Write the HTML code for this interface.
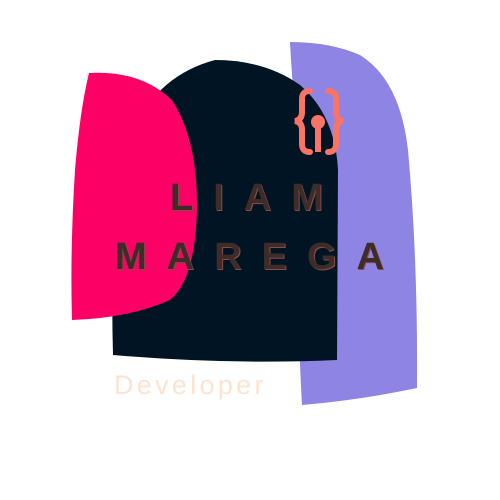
<!DOCTYPE html>
<html><head><style>
body{margin:0;width:500px;height:500px;background:#fff;position:relative;overflow:hidden;font-family:"Liberation Sans",sans-serif}
svg{position:absolute;left:0;top:0}
.t{position:absolute;color:#3d2c28;font-size:38px;font-weight:bold;letter-spacing:20px;text-shadow:1px 1px 0 #8a4a48;white-space:nowrap}
</style></head><body>
<svg width="500" height="500" viewBox="0 0 500 500">
<path d="M290 42 Q330 42 360 55 Q400 80 408 150 Q418 260 417 388 Q360 400 302 405 Q296 300 298 150 Q292 80 290 42Z" fill="#8e84e3"/>
<path d="M215 60 Q265 60 300 85 Q335 115 338 170 L337 360 Q230 365 113 355 Q110 250 120 170 Q140 80 215 60Z" fill="#001423"/>
<path d="M89 73 Q140 70 172 100 Q198 140 197 210 Q195 280 170 300 Q130 318 72 320 Q70 250 75 170 Q80 110 89 73Z" fill="#fd0066"/>
<g fill="none" stroke="#f97366" stroke-width="6" stroke-linecap="round">
<path d="M310 91 Q302 91 302 99 L302 112 Q302 120 295 121 Q302 122 302 130 L302 144 Q302 152 310 152"/>
<path d="M328 91 Q336 91 336 99 L336 112 Q336 120 343 121 Q336 122 336 130 L336 144 Q336 152 328 152"/>
</g>
<circle cx="318" cy="122" r="7" fill="#f97366"/>
<rect x="315" y="128" width="6" height="24" fill="#f97366"/>
</svg>
<div class="t" style="left:170px;top:177px">LIAM</div>
<div class="t" style="left:115px;top:236px">MAREGA</div>
<div style="position:absolute;left:114px;top:370px;color:#fde3d0;font-size:27px;letter-spacing:3.3px">Developer</div>
</body></html>
